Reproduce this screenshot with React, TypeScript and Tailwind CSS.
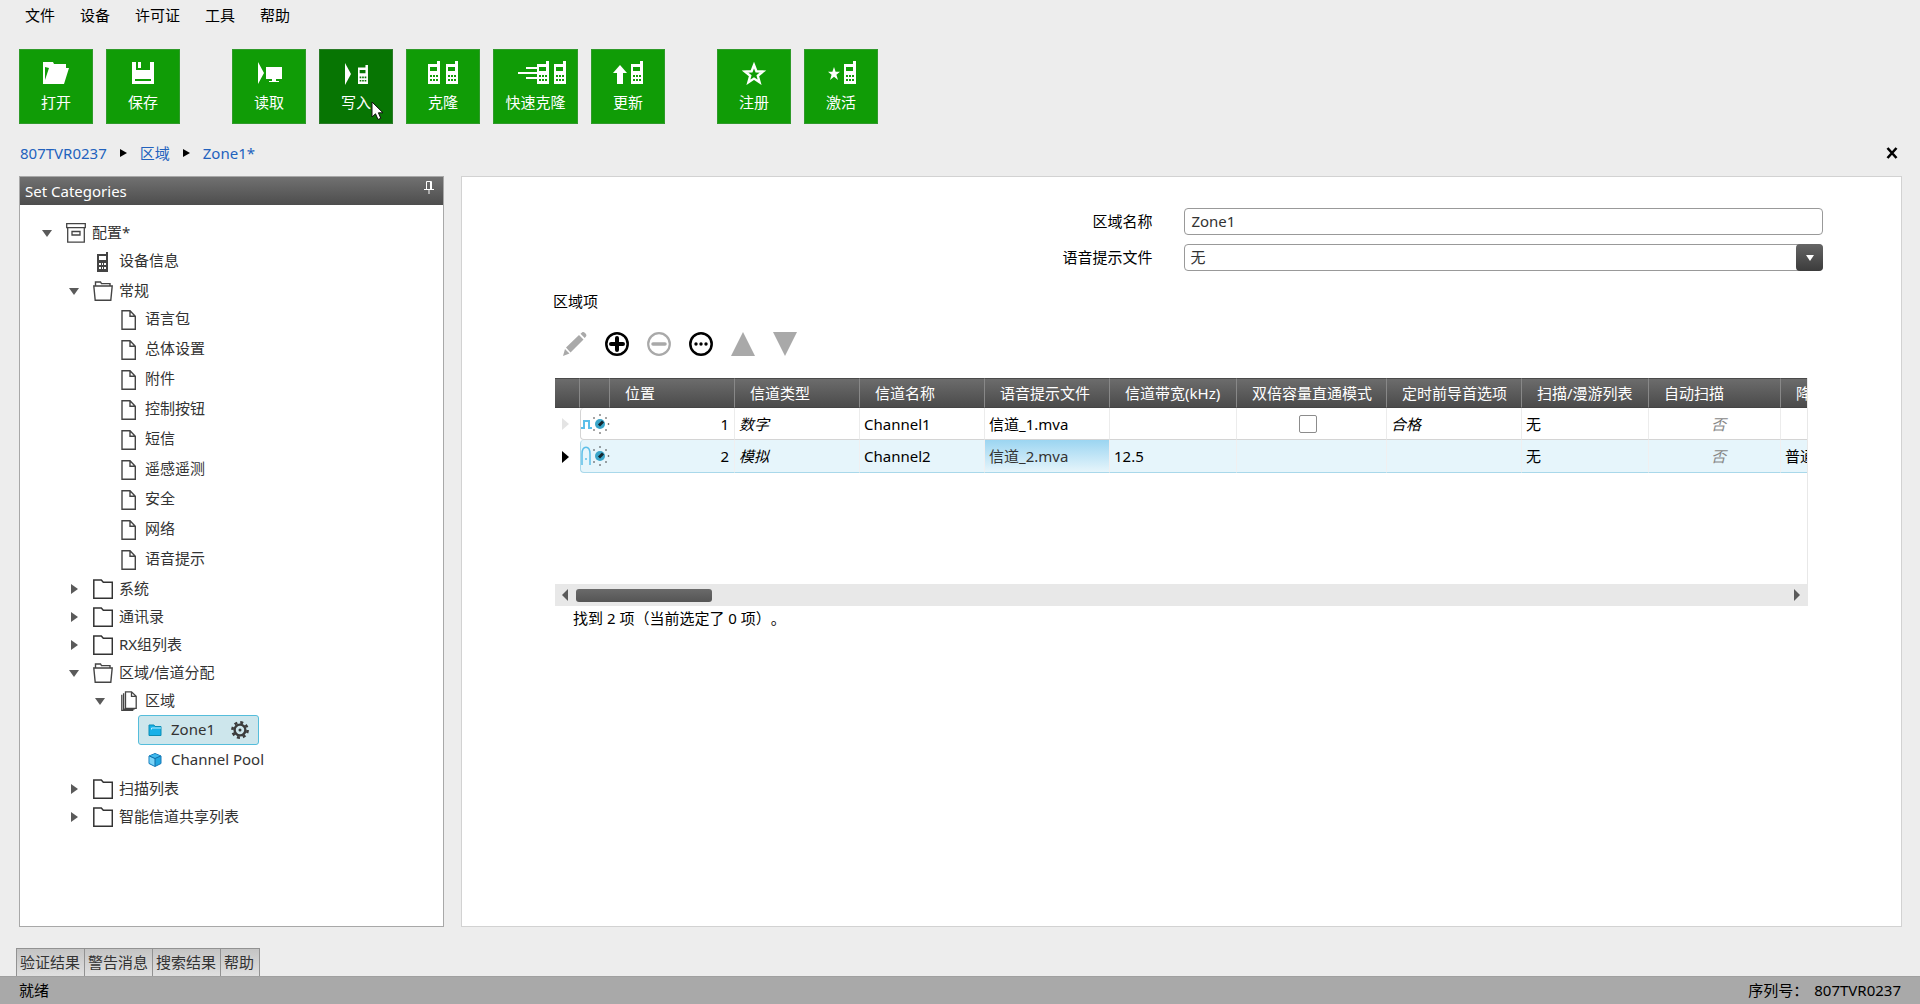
import { useState } from 'react'
import type { ReactNode } from 'react'

interface ToolItem {
  label: string
  icon: ReactNode
  wide?: boolean
  hovered?: boolean
}

interface TreeNode {
  label: string
  level: number
  kind: 'root' | 'device' | 'open' | 'closed' | 'file' | 'files' | 'zone' | 'pool'
}

interface Channel {
  position: number
  type: string
  name: string
  voiceFile: string
  bandwidth: string
  dualCapacity: boolean
  preamble: string
  scanList: string
  autoScan: string
  deemphasis: string
}

function Phone({ x = 0, y = 0, scale = 1, hole = '#109c06' }: { x?: number; y?: number; scale?: number; hole?: string }) {
  return (
    <g transform={`translate(${x} ${y}) scale(${scale})`}>
      <path d="M0 3h9V0h3v23H0z" fill="currentColor" />
      <path d="M2 6h7v4H2zM2 14h2v2H2zM5 14h2v2H5zM8 14h2v2H8zM2 18h2v2H2zM5 18h2v2H5zM8 18h2v2H8z" fill={hole} />
    </g>
  )
}

function ToolSvg({ children, width = 30 }: { children: ReactNode; width?: number }) {
  return (
    <svg width={width} height="24" viewBox={`0 0 ${width} 24`} fill="currentColor" aria-hidden="true">
      {children}
    </svg>
  )
}

const toolGroups: ToolItem[][] = [
  [
    {
      label: '打开',
      icon: (
        <ToolSvg>
          <path fillRule="evenodd" d="M2 1h10l1 2h12v4h3l-5 16H2zM4 6v13L8 7z" />
        </ToolSvg>
      ),
    },
    {
      label: '保存',
      icon: (
        <ToolSvg>
          <path fillRule="evenodd" d="M4 1h4v8h14V1h4v22H4zM7 18v2h16v-2z" />
          <path d="M10 1h3v6h-3z" />
        </ToolSvg>
      ),
    },
  ],
  [
    {
      label: '读取',
      icon: (
        <ToolSvg>
          <path d="M4 1l6 11-6 11zM12 6h16v12H12zM18 18h4v2h3v1H15v-1h3z" />
        </ToolSvg>
      ),
    },
    {
      label: '写入',
      hovered: true,
      icon: (
        <ToolSvg>
          <path d="M4 2l6 11-6 11z" />
          <Phone x={17} y={4} scale={0.83} hole="#077503" />
        </ToolSvg>
      ),
    },
    {
      label: '克隆',
      icon: (
        <ToolSvg>
          <Phone />
          <Phone x={18} />
        </ToolSvg>
      ),
    },
    {
      label: '快速克隆',
      wide: true,
      icon: (
        <ToolSvg width={60}>
          <path d="M20 6h11v2H20zM12 11h19v2H12zM20 16h11v2H20z" />
          <Phone x={31} />
          <Phone x={48} />
        </ToolSvg>
      ),
    },
    {
      label: '更新',
      icon: (
        <ToolSvg>
          <path d="M7 4l7 8h-4v11H4V12H0z" />
          <Phone x={18} />
        </ToolSvg>
      ),
    },
  ],
  [
    {
      label: '注册',
      icon: (
        <ToolSvg>
          <path d="M15 4l2.4 6.3 6.6.2-5.2 4.2 1.8 6.6-5.6-3.7-5.6 3.7 1.8-6.6L6 10.500l6.600-.2z" fill="none" stroke="currentColor" strokeWidth="2.400" />
        </ToolSvg>
      ),
    },
    {
      label: '激活',
      icon: (
        <ToolSvg>
          <path d="M8 6l1.600 4.800H14l-3.600 3L12 19l-4-3.200L4 19l1.600-5.200-3.600-3h4.400z" />
          <Phone x={18} />
        </ToolSvg>
      ),
    },
  ],
]

const menus = ['文件', '设备', '许可证', '工具', '帮助']

const tree: TreeNode[] = [
  { label: '配置*', level: 0, kind: 'root' },
  { label: '设备信息', level: 1, kind: 'device' },
  { label: '常规', level: 1, kind: 'open' },
  { label: '语言包', level: 2, kind: 'file' },
  { label: '总体设置', level: 2, kind: 'file' },
  { label: '附件', level: 2, kind: 'file' },
  { label: '控制按钮', level: 2, kind: 'file' },
  { label: '短信', level: 2, kind: 'file' },
  { label: '遥感遥测', level: 2, kind: 'file' },
  { label: '安全', level: 2, kind: 'file' },
  { label: '网络', level: 2, kind: 'file' },
  { label: '语音提示', level: 2, kind: 'file' },
  { label: '系统', level: 1, kind: 'closed' },
  { label: '通讯录', level: 1, kind: 'closed' },
  { label: 'RX组列表', level: 1, kind: 'closed' },
  { label: '区域/信道分配', level: 1, kind: 'open' },
  { label: '区域', level: 2, kind: 'files' },
  { label: 'Zone1', level: 3, kind: 'zone' },
  { label: 'Channel Pool', level: 3, kind: 'pool' },
  { label: '扫描列表', level: 1, kind: 'closed' },
  { label: '智能信道共享列表', level: 1, kind: 'closed' },
]

const levelPadding = ['pl-[22px]', 'pl-[49px]', 'pl-[75px]', 'pl-[118px]']

const columns = [
  { label: '', width: 'w-[25px]' },
  { label: '', width: 'w-[30px]' },
  { label: '位置', width: 'w-[125px]' },
  { label: '信道类型', width: 'w-[125px]' },
  { label: '信道名称', width: 'w-[125px]' },
  { label: '语音提示文件', width: 'w-[125px]' },
  { label: '信道带宽(kHz)', width: 'w-[127px]' },
  { label: '双倍容量直通模式', width: 'w-[150px]' },
  { label: '定时前导首选项', width: 'w-[135px]' },
  { label: '扫描/漫游列表', width: 'w-[127px]' },
  { label: '自动扫描', width: 'w-[132px]' },
  { label: '降噪', width: 'w-[120px]' },
]

const channels: Channel[] = [
  {
    position: 1,
    type: '数字',
    name: 'Channel1',
    voiceFile: '信道_1.mva',
    bandwidth: '',
    dualCapacity: true,
    preamble: '合格',
    scanList: '无',
    autoScan: '否',
    deemphasis: '',
  },
  {
    position: 2,
    type: '模拟',
    name: 'Channel2',
    voiceFile: '信道_2.mva',
    bandwidth: '12.5',
    dualCapacity: false,
    preamble: '',
    scanList: '无',
    autoScan: '否',
    deemphasis: '普通',
  },
]

const bottomTabs = ['验证结果', '警告消息', '搜索结果', '帮助']

function ToolButton({ label, icon, wide, hovered }: ToolItem) {
  return (
    <button
      className={`relative flex h-[75px] flex-col items-center border pt-[11px] text-white ${wide ? 'w-[85px]' : 'w-[74px]'} ${
        hovered ? 'border-[#2a7a28] bg-[#077503]' : 'border-[#2f9a2a] bg-[#109c06]'
      }`}
    >
      {icon}
      <span className="mt-[5px] leading-6">{label}</span>
      {hovered && (
        <svg className="absolute top-[51px] left-[51px]" width="14" height="20" viewBox="0 0 14 20" aria-hidden="true">
          <path d="M1 1v15l3.500-3.200L7 18.500l2.800-1.200-2.400-5.500H12z" fill="#fff" stroke="#111" />
        </svg>
      )}
    </button>
  )
}

function NodeIcon({ kind }: { kind: TreeNode['kind'] }) {
  switch (kind) {
    case 'root':
      return (
        <svg width="20" height="20" viewBox="0 0 20 20" fill="none" stroke="#444" strokeWidth="1.300">
          <path d="M.7.7h18.600v4H.7zM1.700 4.700h16.600v14.500H1.700zM6 8.500h8v3.500h-8z" />
        </svg>
      )
    case 'device':
      return (
        <svg width="12" height="20" viewBox="0 0 12 20" fill="#444">
          <path fillRule="evenodd" d="M0 2h9V0h2v20H0zM2 4v4h7V4zM2 11v2h2v-2zM5 11v2h1v-2zM7 11v2h2v-2zM2 15v2h2v-2zM5 15v2h1v-2zM7 15v2h2v-2z" />
        </svg>
      )
    case 'open':
      return (
        <svg width="20" height="20" viewBox="0 0 20 20" fill="none" stroke="#444" strokeWidth="1.400">
          <path d="M2.500 5V1h5l1 1.600h8.500V5M.8 5h18.400l-1.400 14.200H2.200z" />
        </svg>
      )
    case 'closed':
      return (
        <svg width="20" height="20" viewBox="0 0 20 20" fill="none" stroke="#333" strokeWidth="1.500">
          <path d="M.8 1h7.500l2 2.200h9V19.200H.8z" />
        </svg>
      )
    case 'file':
      return (
        <svg width="16" height="20" viewBox="0 0 16 20" fill="none" stroke="#444" strokeWidth="1.400">
          <path d="M1 .8h8l5.300 5.500v13H1zM9 .8v5.500h5.300" />
        </svg>
      )
    case 'files':
      return (
        <svg width="16" height="20" viewBox="0 0 16 20" fill="none" stroke="#444" strokeWidth="1.300">
          <path d="M4.500.8h6l4.700 4.500v12H4.500zM10.500.8v4.500h4.700M2.600 2.200v16h11M.8 3.800v15.500h11.500" />
        </svg>
      )
    case 'zone':
      return (
        <svg width="14" height="12" viewBox="0 0 14 12">
          <path d="M1 1h5l1 1.500h6v9H1z" fill="#17b1e8" stroke="#0b8db4" />
          <path d="M3.500 5.500V4H13" stroke="#b8ecff" fill="none" />
        </svg>
      )
    case 'pool':
      return (
        <svg width="14" height="14" viewBox="0 0 14 14">
          <path d="M7 .5l6 2.500v7.500L7 13.500l-6-3V3z" fill="#22a7e0" stroke="#1678b8" />
          <path d="M1.500 3.500L7 6v7l-5.500-3z" fill="#7bd3f7" />
          <path d="M1.500 3L7 1l5.500 2L7 5.500z" fill="#3fb9ec" />
          <path d="M7 5.500V13M1.500 3L7 5.500 12.500 3" stroke="#0f6ba6" fill="none" />
        </svg>
      )
  }
}

function TreeRow({ node }: { node: TreeNode }) {
  const { kind, label, level } = node
  const expanded = kind === 'root' || kind === 'open' || kind === 'files'

  if (kind === 'zone') {
    return (
      <li className={`flex h-[30px] items-center ${levelPadding[level]}`}>
        <div className="flex h-[30px] items-center rounded-[3px] border border-[#55bddb] bg-[#cde6ec] pr-[9px] pl-[9px]">
          <button className="flex items-center gap-[9px]">
            <NodeIcon kind={kind} />
            <span className="pb-0.5 leading-6">{label}</span>
          </button>
          <button className="ml-4" aria-label="设置">
            <svg width="18" height="18" viewBox="0 0 18 18" fill="none" stroke="#3c3c3c">
              <circle cx="9" cy="9" r="5.400" strokeWidth="2.400" />
              <circle cx="9" cy="9" r="7.600" strokeWidth="2.600" strokeDasharray="3 2.970" />
              <circle cx="9" cy="9" r="1.500" fill="#3c3c3c" stroke="none" />
            </svg>
          </button>
        </div>
      </li>
    )
  }

  if (kind === 'pool') {
    return (
      <li className={`flex h-[30px] items-center ${levelPadding[level]}`}>
        <button className="flex items-center gap-[9px] pl-2.5">
          <NodeIcon kind={kind} />
          <span className="pb-0.5 leading-6">{label}</span>
        </button>
      </li>
    )
  }

  const leaf = kind === 'file' || kind === 'device'

  return (
    <li className={`flex items-center ${leaf ? 'h-[30px]' : 'h-7'} ${levelPadding[level]}`}>
      <span className="w-6 shrink-0">
        {expanded && (
          <svg width="10" height="8" viewBox="0 0 10 8" fill="#5a5a5a">
            <path d="M0 1h10L5 8z" />
          </svg>
        )}
        {kind === 'closed' && (
          <svg width="10" height="10" viewBox="0 0 10 10" fill="#5a5a5a">
            <path d="M2 0v10l7-5z" />
          </svg>
        )}
      </span>
      <button className="flex items-center gap-1.5">
        <span className="flex w-5 justify-center">
          <NodeIcon kind={kind} />
        </span>
        <span className={`leading-6 ${leaf ? 'pb-1' : 'pb-[3px]'}`}>{label}</span>
      </button>
    </li>
  )
}

function ChannelIcon({ digital }: { digital: boolean }) {
  return (
    <svg width="29" height="22" viewBox="0 0 29 22" fill="none" aria-hidden="true">
      {digital ? (
        <path d="M0 15h3V8h5v7h3" stroke="#5cbfe9" strokeWidth="2" />
      ) : (
        <>
          <path d="M1 20V9c0-9 8-9 8 0v11" stroke="#5cbfe9" strokeWidth="1.500" />
          <circle cx="5" cy="14" r="1" fill="#5cbfe9" />
        </>
      )}
      <circle cx="19" cy="11" r="5" fill="#3aa5c9" />
      <path d="M18 12.500l4-4" stroke="#15262e" strokeWidth="3" />
      <g fill="#333">
        <circle cx="19" cy="2" r="0.800" />
        <circle cx="25" cy="5" r="0.800" />
        <circle cx="27.500" cy="11" r="0.800" />
        <circle cx="25" cy="17" r="0.800" />
        <circle cx="19" cy="20" r="0.800" />
        <circle cx="13" cy="17" r="0.800" />
        <circle cx="13" cy="5" r="0.800" />
      </g>
    </svg>
  )
}

function ChannelTable() {
  const [current, setCurrent] = useState(2)

  return (
    <div className="h-[206px] overflow-hidden border-r border-[#e8e8e8]">
      <table className="w-[1346px] table-fixed border-separate border-spacing-0">
        <thead>
          <tr>
            {columns.map((col, i) => (
              <th
                key={i}
                className={`h-[30px] border-t border-r border-b border-t-[#4a4a4a] border-r-[#888] border-b-[#444] bg-linear-to-b from-[#6c6c6c] to-[#4b4b4b] p-0 text-left font-normal whitespace-nowrap text-white ${col.width} ${
                  i > 1 ? 'pl-[15px]' : ''
                }`}
              >
                {col.label}
              </th>
            ))}
          </tr>
        </thead>
        <tbody>
          {channels.map((ch) => {
            const active = ch.position === current
            const cell = `border-r border-b p-0 pl-1 whitespace-nowrap ${
              active ? 'h-[33px] border-r-[#f0eff0] border-b-[#a9d8ea] bg-[#e6f5fb]' : 'h-8 border-r-[#ececec] border-b-[#d4d4d4] bg-white'
            }`
            return (
              <tr key={ch.position} onClick={() => setCurrent(ch.position)}>
                <td className="p-0 pl-[7px]">
                  <svg width="8" height="12" viewBox="0 0 8 12" fill={active ? '#000' : '#e4e4e4'}>
                    <path d="M0 0v12l7-6z" />
                  </svg>
                </td>
                <td
                  className={`rounded-l-[4px] border-b border-l p-0 ${
                    active ? 'border-[#a9d8ea] bg-[#e6f5fb]' : 'border-[#d4d4d4] bg-white'
                  }`}
                >
                  <ChannelIcon digital={ch.type === '数字'} />
                </td>
                <td className={`${cell} pr-[5px] text-right`}>{ch.position}</td>
                <td className={`${cell} italic`}>{ch.type}</td>
                <td className={cell}>{ch.name}</td>
                <td className={`${cell} ${active ? 'bg-linear-to-b from-[#9bd5f1] to-[#e6f5fb] text-[#333]' : ''}`}>{ch.voiceFile}</td>
                <td className={cell}>{ch.bandwidth}</td>
                <td className={`${cell} pr-3 text-center`}>
                  {ch.dualCapacity && (
                    <input
                      type="checkbox"
                      aria-label="双倍容量直通模式"
                      className="mx-auto block size-[18px] appearance-none rounded-[2px] border border-[#8c8c8c] bg-white checked:bg-[#4fb8e6]"
                    />
                  )}
                </td>
                <td className={`${cell} italic`}>{ch.preamble}</td>
                <td className={cell}>{ch.scanList}</td>
                <td className={`${cell} pl-2 text-center text-[#888] italic`}>{ch.autoScan}</td>
                <td className={cell}>{ch.deemphasis}</td>
              </tr>
            )
          })}
        </tbody>
      </table>
    </div>
  )
}

export default function App() {
  const [zoneName, setZoneName] = useState('Zone1')

  return (
    <div className="flex min-h-screen flex-col bg-[#ededed] font-['Noto_Sans','Noto_Sans_CJK_SC',sans-serif] text-[15px] leading-6 text-black">
      {/* Menu */}
      <nav className="flex h-[49px] gap-[25px] pt-[3px] pl-[25px]">
        {menus.map((menu) => (
          <button key={menu} className="h-6">
            {menu}
          </button>
        ))}
      </nav>

      {/* Toolbar */}
      <div className="flex gap-[52px] pl-[19px]">
        {toolGroups.map((group, i) => (
          <div key={i} className="flex gap-[13px]">
            {group.map((tool) => (
              <ToolButton key={tool.label} {...tool} />
            ))}
          </div>
        ))}
      </div>

      {/* Breadcrumb */}
      <div className="flex h-[52px] items-center justify-between pt-1.5 pr-[21px] pl-5">
        <div className="flex items-center gap-[13px] text-[#2262bd]">
          <a href="#device">807TVR0237</a>
          <svg width="7" height="8" viewBox="0 0 7 8" fill="#000">
            <path d="M0 0v8l7-4z" />
          </svg>
          <a href="#zones">区域</a>
          <svg width="7" height="8" viewBox="0 0 7 8" fill="#000">
            <path d="M0 0v8l7-4z" />
          </svg>
          <a href="#zone1">Zone1*</a>
        </div>
        <button aria-label="关闭">
          <svg width="14" height="12" viewBox="0 0 14 12" fill="none" stroke="#000" strokeWidth="2.600">
            <path d="M2.500 1l9 10M11.500 1l-9 10" />
          </svg>
        </button>
      </div>

      <div className="mb-[21px] flex flex-1 gap-[17px] pr-[18px] pl-[19px]">
        {/* Categories */}
        <aside className="w-[425px] shrink-0 border border-[#a8a8a8] bg-white">
          <div className="flex h-[28px] items-start justify-between bg-linear-to-b from-[#717171] to-[#4d4d4d] pr-[9px] pl-[5px] text-white">
            <h2 className="pt-0.5">Set Categories</h2>
            <button className="pt-1" aria-label="固定">
              <svg width="10" height="13" viewBox="0 0 10 13" fill="none" stroke="#fff">
                <path d="M2.500 8V.5h5V8M6.500.5V8M0 8.500h10M5 8.500V13" />
              </svg>
            </button>
          </div>
          <ul className="pt-[14px] text-[#333]">
            {tree.map((node) => (
              <TreeRow key={node.label} node={node} />
            ))}
          </ul>
        </aside>

        {/* Zone editor */}
        <main className="min-w-0 flex-1 border border-[#d2d2d2] bg-white pt-[31px] pl-[91px]">
          <div className="mr-[78px] grid grid-cols-[46fr_49fr] items-center gap-x-8 gap-y-[9px]">
            <label htmlFor="zone-name" className="pb-0.5 text-right">
              区域名称
            </label>
            <input
              id="zone-name"
              value={zoneName}
              onChange={(e) => setZoneName(e.target.value)}
              className="h-[27px] rounded-[4px] border border-[#999] bg-white px-1.5 pb-0.5 text-[#333]"
            />
            <label htmlFor="voice-file" className="pb-0.5 text-right">
              语音提示文件
            </label>
            <div className="relative">
              <select
                id="voice-file"
                className="block h-[27px] w-full appearance-none rounded-[4px] border border-[#999] bg-white px-[5px] pb-0.5 text-[#333]"
              >
                <option>无</option>
              </select>
              <span className="pointer-events-none absolute inset-y-0 right-0 flex w-[27px] items-center justify-center rounded-[4px] bg-linear-to-b from-[#666] to-[#3c3c3c]">
                <svg width="8" height="6" viewBox="0 0 8 6" fill="#fff">
                  <path d="M0 0h8L4 6z" />
                </svg>
              </span>
            </div>
          </div>

          <h3 className="mt-[18px]">区域项</h3>

          <div className="mt-[19px] flex gap-[18px] pl-2.5">
            <button className="size-6" aria-label="编辑" disabled>
              <svg width="24" height="24" viewBox="0 0 24 24" fill="#a9a9a9">
                <path d="M0 24l2-7 4.500 4.500zM3 15.500L16 3l4.500 4.500L7.500 20.500zM17.500 1.800L19 .5c1-.8 2-.5 3 .5s2 2 1 3.500l-1.300 1.500z" />
              </svg>
            </button>
            <button className="size-6" aria-label="添加">
              <svg width="24" height="24" viewBox="0 0 24 24" fill="none" stroke="#000">
                <circle cx="12" cy="12" r="10.700" strokeWidth="2.500" />
                <path d="M12 6v12M6 12h12" strokeWidth="4" strokeLinecap="round" />
              </svg>
            </button>
            <button className="size-6" aria-label="删除" disabled>
              <svg width="24" height="24" viewBox="0 0 24 24" fill="none" stroke="#a9a9a9">
                <circle cx="12" cy="12" r="10.800" strokeWidth="2.200" />
                <path d="M6 12h12" strokeWidth="3.500" strokeLinecap="round" />
              </svg>
            </button>
            <button className="size-6" aria-label="更多">
              <svg width="24" height="24" viewBox="0 0 24 24" fill="#000">
                <circle cx="12" cy="12" r="10.700" strokeWidth="2.500" stroke="#000" fill="none" />
                <circle cx="7" cy="12" r="1.700" />
                <circle cx="12" cy="12" r="1.700" />
                <circle cx="17" cy="12" r="1.700" />
              </svg>
            </button>
            <button className="size-6" aria-label="上移" disabled>
              <svg width="24" height="24" viewBox="0 0 24 24" fill="#a9a9a9">
                <path d="M12 0l12 24H0z" />
              </svg>
            </button>
            <button className="size-6" aria-label="下移" disabled>
              <svg width="24" height="24" viewBox="0 0 24 24" fill="#a9a9a9">
                <path d="M0 0h24L12 24z" />
              </svg>
            </button>
          </div>

          <div className="mt-[22px] mr-[93px] ml-0.5">
            <ChannelTable />
            <div className="flex h-[22px] items-center bg-[#e8e8e8] pr-2 pl-[7px]">
              <button aria-label="向左滚动">
                <svg width="6" height="12" viewBox="0 0 6 12" fill="#5a5a5a">
                  <path d="M6 0v12L0 6z" />
                </svg>
              </button>
              <div className="mx-2 flex-1">
                <div className="h-[13px] w-[136px] rounded-[3px] bg-linear-to-b from-[#6a6a6a] to-[#555]" />
              </div>
              <button aria-label="向右滚动">
                <svg width="6" height="12" viewBox="0 0 6 12" fill="#5a5a5a">
                  <path d="M0 0v12l6-6z" />
                </svg>
              </button>
            </div>
            <p className="pl-[18px] [text-spacing-trim:space-all]">找到 2 项（当前选定了 0 项）。</p>
          </div>
        </main>
      </div>

      {/* Result tabs */}
      <div className="flex pl-4">
        {bottomTabs.map((tab) => (
          <button
            key={tab}
            className="h-7 border-t border-l border-[#929292] bg-linear-to-b from-[#c4c4c4] to-[#e0e0e0] pr-1 pb-0.5 pl-[3px] text-[#333] last:border-r last:pr-[5px]"
          >
            {tab}
          </button>
        ))}
      </div>

      <footer className="flex h-7 items-center justify-between border-t border-[#a0a0a0] bg-[#a9a9a9] pr-[19px] pb-0.5 pl-[19px]">
        <span>就绪</span>
        <span className="flex gap-1.5">
          <span>序列号：</span>
          <span>807TVR0237</span>
        </span>
      </footer>
    </div>
  )
}
